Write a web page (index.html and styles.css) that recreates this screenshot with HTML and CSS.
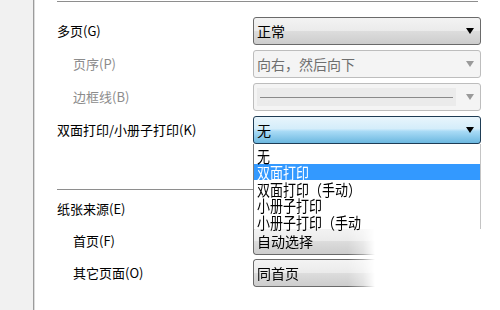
FILE: index.html
```html
<!DOCTYPE html>
<html lang="zh-CN">
<head>
<meta charset="utf-8">
<title>打印设置</title>
<link rel="stylesheet" href="styles.css">
</head>
<body>
<div class="page">
  <div class="strip"></div>
  <div class="content">
    <div class="rule-top"></div>
    <div class="form">
      <div class="row">
        <div class="label">多页(G)</div>
        <div class="select normal"><span class="val">正常</span><span class="arrow"></span></div>
      </div>
      <div class="row">
        <div class="label sub disabled">页序(P)</div>
        <div class="select off"><span class="val">向右，然后向下</span><span class="arrow"></span></div>
      </div>
      <div class="row">
        <div class="label sub disabled">边框线(B)</div>
        <div class="select off"><span class="linebox"><span class="line"></span></span><span class="arrow"></span></div>
      </div>
      <div class="row">
        <div class="label">双面打印/小册子打印(K)</div>
        <div class="select focus"><span class="val">无</span><span class="arrow"></span>
          <ul class="list">
            <li><span>无</span></li>
            <li class="hi"><span>双面打印</span></li>
            <li><span>双面打印（手动）</span></li>
            <li><span>小册子打印</span></li>
            <li><span>小册子打印（手动</span></li>
          </ul>
        </div>
      </div>
    </div>
    <div class="sep"></div>
    <div class="form lower">
      <div class="row">
        <div class="label">纸张来源(E)</div>
        <div></div>
      </div>
      <div class="row">
        <div class="label sub">首页(F)</div>
        <div class="select normal faded"><span class="val">自动选择</span></div>
      </div>
      <div class="row">
        <div class="label sub">其它页面(O)</div>
        <div class="select normal faded"><span class="val">同首页</span></div>
      </div>
    </div>
  </div>
</div>
</body>
</html>
```

FILE: styles.css
```css
html, body {
  margin: 0;
  padding: 0;
  background: #ffffff;
}
body {
  width: 500px;
  height: 310px;
  overflow: hidden;
  font-family: "Noto Sans CJK SC", "Noto Sans", sans-serif;
  font-size: 13px;
  color: #000;
}
.page {
  display: flex;
  height: 310px;
}
.strip {
  width: 33px;
  flex: none;
  background: #f1f1f1;
  border-right: 1px solid #9c9c9c;
  box-shadow: 1px 0 0 #dcdcdc;
}
.content {
  padding-left: 23px;
  width: 424px;
}
.rule-top {
  height: 1px;
  margin-top: 1px;
  width: 421px;
  background: #8e8e8e;
}
.form {
  display: flex;
  flex-direction: column;
  gap: 5px;
  margin-top: 15px;
}
.row {
  display: grid;
  grid-template-columns: 196px 228px;
  height: 28px;
  align-items: center;
}
.label {
  line-height: 16px;
  white-space: nowrap;
}
.label.sub { padding-left: 16px; }
.label.disabled { color: #8c8c8c; }

.select {
  position: relative;
  box-sizing: border-box;
  height: 28px;
  border: 1px solid #6a6a6a;
  border-radius: 3px;
  display: flex;
  align-items: center;
  padding: 0 6px 0 3px;
  font-size: 14px;
}
.select .val {
  flex: 1;
  line-height: 18px;
  white-space: nowrap;
}
.arrow {
  width: 0;
  height: 0;
  border-left: 4px solid transparent;
  border-right: 4px solid transparent;
  border-top: 6px solid #000;
}
.normal {
  background: linear-gradient(#f3f3f3 0%, #ebebeb 48%, #dcdcdc 52%, #cdcdcd 100%);
}
.off {
  background: #f4f4f4;
  border-color: #bdbdbd;
  color: #6e6e6e;
}
.off .arrow { border-top-color: #9a9a9a; }
.linebox {
  flex: 1;
  height: 18px;
  margin-right: 10px;
  background: #ebebeb;
  display: flex;
  align-items: center;
  padding: 0 3px;
}
.line {
  flex: 1;
  height: 1px;
  background: #8a8a8a;
}
.focus {
  border-color: #1e3c55;
  background: linear-gradient(#e8f5fc 0%, #d4edfa 45%, #a9dbf6 55%, #6cb8e0 100%);
}
.list {
  position: absolute;
  left: -1px;
  top: 27px;
  width: 228px;
  height: 85px;
  box-sizing: border-box;
  margin: 0;
  padding: 3px 0 0 0;
  list-style: none;
  background: #fff;
  border-left: 1px solid #7a7a7a;
  border-right: 1px solid #c4c4c4;
  font-size: 13px;
  z-index: 5;
}
.list li {
  height: 16.5px;
  line-height: 16.5px;
  padding-left: 3px;
  white-space: nowrap;
  overflow: visible;
}
.list li span {
  display: inline-block;
  line-height: 13px;
  vertical-align: middle;
  transform: scaleY(1.2);
}
.list li.hi {
  background: #3399ff;
  color: #fff;
}
.sep {
  height: 1px;
  width: 200px;
  background: #8e8e8e;
  margin-top: 45px;
}
.form.lower {
  margin-top: 5px;
  gap: 4px;
}
.faded {
  border-right: none;
  -webkit-mask-image: linear-gradient(to right, #000 95px, rgba(0,0,0,0.6) 110px, transparent 122px);
  mask-image: linear-gradient(to right, #000 95px, rgba(0,0,0,0.6) 110px, transparent 122px);
}
```
